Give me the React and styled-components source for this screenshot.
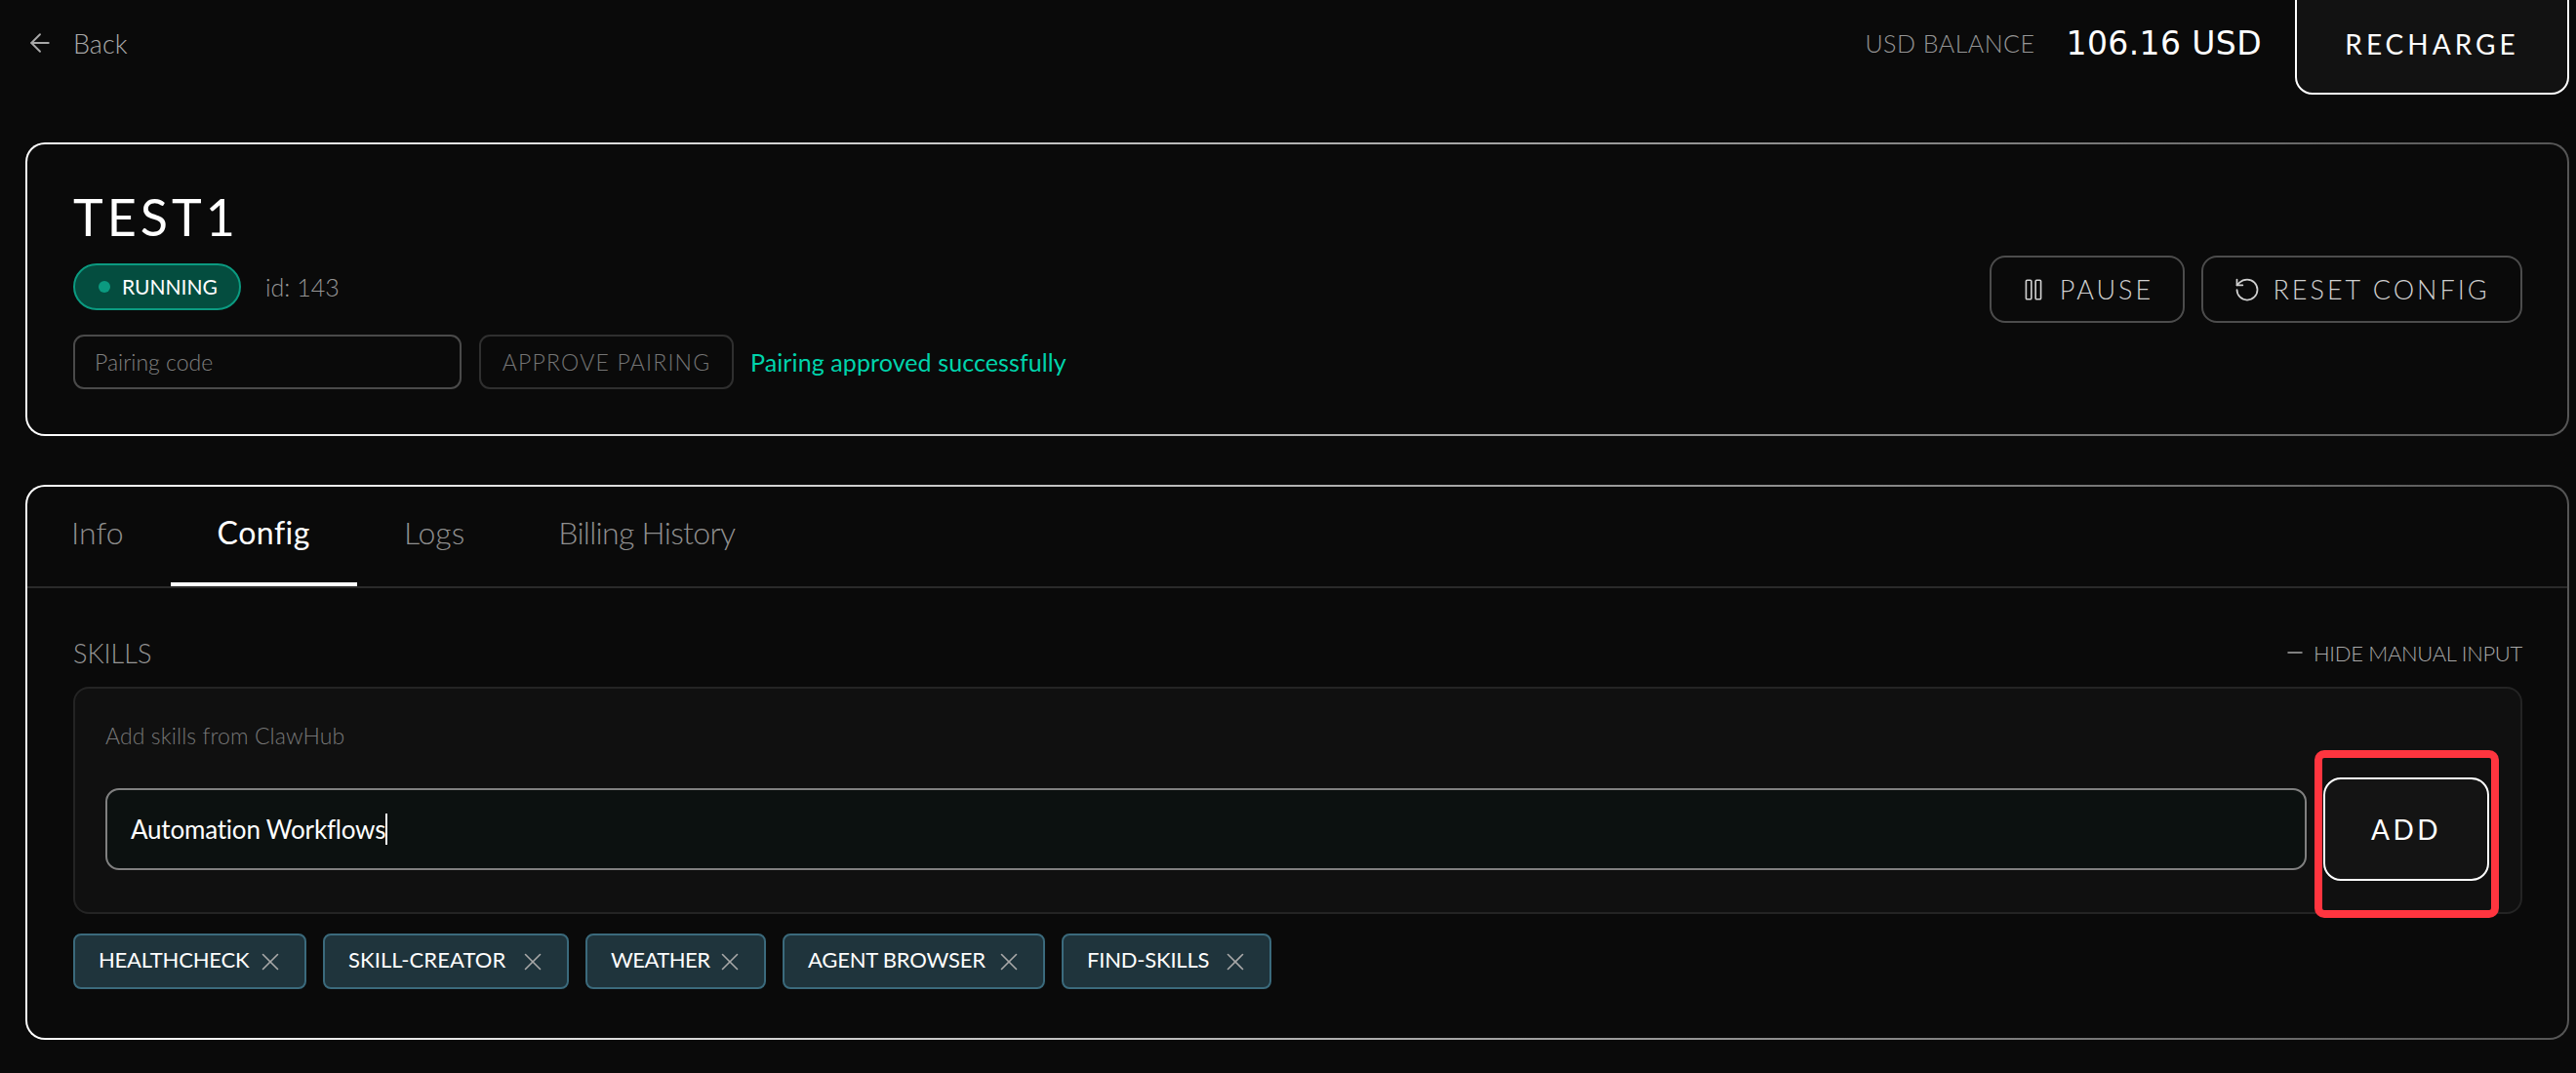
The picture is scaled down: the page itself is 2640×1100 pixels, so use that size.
import React from 'react';
import styled, { createGlobalStyle } from 'styled-components';
import { ArrowLeft, Minus, Pause, RotateCcw, X } from 'lucide-react';

const GlobalStyle = createGlobalStyle`
  html, body {
    margin: 0;
    padding: 0;
    background: #0a0a0a;
    font-family: "Lato", "Liberation Sans", sans-serif;
    color: #fff;
  }
  * { box-sizing: border-box; }
`;

const Page = styled.div`
  width: 2640px;
  height: 1100px;
  padding: 0 7px 0 26px;
  overflow: hidden;
  background: #0a0a0a;
`;

const Header = styled.header`
  display: flex;
  justify-content: space-between;
  height: 97px;
  overflow: hidden;
`;

const BackLink = styled.a`
  display: flex;
  align-items: center;
  gap: 19px;
  height: 88px;
  font-size: 27px;
  font-weight: 300;
  color: #a8a8a8;
`;

const Balance = styled.div`
  display: flex;
  align-items: flex-start;
  height: 97px;
`;

const BalanceLabel = styled.span`
  margin-top: 29px;
  margin-right: 32px;
  font-size: 25px;
  font-weight: 300;
  color: #969696;
  letter-spacing: 0.5px;
`;

const BalanceValue = styled.span`
  margin-top: 25px;
  margin-right: 34px;
  font: 400 33px "DejaVu Sans", sans-serif;
  letter-spacing: 0.4px;
  color: #fff;
`;

const RechargeButton = styled.button`
  width: 281px;
  height: 130px;
  margin-top: -33px;
  padding: 25px 0 0;
  border: 2px solid #fff;
  border-radius: 18px;
  background: #121212;
  color: #fff;
  font: 400 28px "Lato", sans-serif;
  letter-spacing: 4px;
`;

const Card = styled.section`
  margin-top: ${p => p.$top}px;
  height: ${p => p.$height}px;
  border: 2px solid transparent;
  border-radius: 20px;
  background:
    linear-gradient(#0a0a0a, #0a0a0a) padding-box,
    linear-gradient(90deg, #fff 0%, #bbb 45%, #555 100%) border-box;
`;

const SummaryCard = styled(Card)`
  display: flex;
  align-items: center;
  justify-content: space-between;
  padding: 0 46px 0 47px;
`;

const Summary = styled.div`
  display: flex;
  flex-direction: column;
  align-items: flex-start;
  padding-top: 3px;
`;

const Title = styled.h1`
  margin: 0 0 22px;
  height: 50px;
  font-size: 52px;
  line-height: 48px;
  font-weight: 400;
  letter-spacing: 4px;
`;

const StatusRow = styled.div`
  display: flex;
  align-items: center;
  gap: 25px;
  margin-bottom: 25px;
`;

const StatusPill = styled.span`
  display: flex;
  align-items: center;
  gap: 12px;
  width: 172px;
  height: 48px;
  padding-left: 24px;
  border: 2px solid #0b9a80;
  border-radius: 24px;
  background: #044d3f;
  font-size: 21px;
  font-weight: 400;
`;

const StatusDot = styled.i`
  width: 12px;
  height: 12px;
  border-radius: 50%;
  background: #0b9a80;
`;

const IdText = styled.span`
  font-size: 25px;
  font-weight: 300;
  color: #969696;
`;

const PairingRow = styled.div`
  display: flex;
  align-items: center;
`;

const PairingField = styled.div`
  display: flex;
  align-items: center;
  width: 398px;
  height: 56px;
  padding-left: 20px;
  border: 2px solid #4a4a4a;
  border-radius: 11px;
  font-size: 23px;
  font-weight: 300;
  color: #808080;
`;

const ApproveButton = styled.button`
  width: 261px;
  height: 56px;
  margin: 0 17px 0 18px;
  padding: 0;
  border: 2px solid #2f2f2f;
  border-radius: 11px;
  background: transparent;
  color: #757575;
  font: 300 23px "Lato", sans-serif;
  letter-spacing: 1.2px;
`;

const SuccessText = styled.span`
  font-size: 25px;
  font-weight: 400;
  letter-spacing: 0.1px;
  color: #00d4ac;
`;

const Actions = styled.div`
  display: flex;
  gap: 17px;
`;

const ActionButton = styled.button`
  display: flex;
  align-items: center;
  justify-content: center;
  gap: ${p => p.$gap}px;
  width: ${p => p.$width}px;
  height: 69px;
  padding: 0;
  border: 2px solid #4c4c4c;
  border-radius: 16px;
  background: transparent;
  color: #d0d0d0;
  font: 300 27px "Lato", sans-serif;
  letter-spacing: 3px;
`;

const Tabs = styled.nav`
  display: flex;
  height: 104px;
  border-bottom: 2px solid #2a2a2a;
`;

const Tab = styled.div`
  display: flex;
  align-items: center;
  height: 102px;
  padding: 0 48px 5px;
  font-size: 32px;
  font-weight: ${p => (p.$active ? 400 : 300)};
  letter-spacing: ${p => p.$spacing}px;
  color: ${p => (p.$active ? '#fff' : '#8f8f8f')};
  border-bottom: 4px solid ${p => (p.$active ? '#fff' : 'transparent')};
  &:first-child { margin-left: -3px; }
`;

const ConfigBody = styled.div`
  padding: 0 46px 0 47px;
`;

const SectionHead = styled.div`
  display: flex;
  align-items: center;
  justify-content: space-between;
  height: 28px;
  margin: 52px 0 21px;
`;

const SectionTitle = styled.span`
  font-size: 27px;
  font-weight: 300;
  color: #969696;
`;

const ManualToggle = styled.span`
  display: flex;
  align-items: center;
  gap: 7px;
  font-size: 22px;
  font-weight: 300;
  letter-spacing: -0.3px;
  color: #a8a8a8;
`;

const SkillsPanel = styled.div`
  height: 233px;
  padding: 29px 32px 0 31px;
  border: 2px solid #242424;
  border-radius: 16px;
  background: #101010;
`;

const PanelLabel = styled.div`
  height: 38px;
  margin-bottom: 24px;
  line-height: 38px;
  font-size: 23px;
  font-weight: 300;
  letter-spacing: 0.1px;
  color: #777;
`;

const AddRow = styled.div`
  display: flex;
  align-items: center;
  gap: 17px;
`;

const SkillInput = styled.div`
  flex: 1;
  display: flex;
  align-items: center;
  height: 84px;
  padding-left: 24px;
  border: 2px solid #808080;
  border-radius: 14px;
  background: #0c1110;
  font-size: 26px;
  font-weight: 400;
  letter-spacing: -0.2px;
`;

const Caret = styled.i`
  width: 2px;
  height: 32px;
  background: #fff;
`;

const AddWrap = styled.div`
  position: relative;
`;

const AddButton = styled.button`
  display: block;
  width: 170px;
  height: 106px;
  padding: 0;
  border: 2px solid #fff;
  border-radius: 18px;
  background: #141414;
  color: #fff;
  font: 400 28px "Lato", sans-serif;
  letter-spacing: 3.5px;
`;

const Highlight = styled.div`
  position: absolute;
  inset: -28px -10px -38px -9px;
  border: 8px solid #ff353f;
  border-radius: 10px;
  pointer-events: none;
`;

const Chips = styled.div`
  display: flex;
  gap: 17px;
  margin-top: 20px;
`;

const Chip = styled.span`
  display: flex;
  align-items: center;
  justify-content: space-between;
  width: ${p => p.$width}px;
  height: 57px;
  padding: 0 20px 4px 24px;
  border: 2px solid #3b6a7c;
  border-radius: 8px;
  background: #1f343c;
  font-size: 22px;
  font-weight: 400;
  letter-spacing: ${p => p.$spacing}px;
  color: #fff;
  svg { color: #a8a8a8; flex: none; margin-top: 4px; }
`;

const skills = [
  { name: 'HEALTHCHECK', width: 239, spacing: -0.2 },
  { name: 'SKILL-CREATOR', width: 252, spacing: 0.1 },
  { name: 'WEATHER', width: 185, spacing: -0.5 },
  { name: 'AGENT BROWSER', width: 269, spacing: -0.2 },
  { name: 'FIND-SKILLS', width: 215, spacing: -0.2 },
];

const tabs = [
  { name: 'Info', spacing: 0 },
  { name: 'Config', spacing: 0.5 },
  { name: 'Logs', spacing: 0 },
  { name: 'Billing History', spacing: -0.7 },
];

export default function App() {
  return (
    <Page>
      <GlobalStyle />
      <Header>
        <BackLink>
          <ArrowLeft size={30} strokeWidth={1.5} />
          Back
        </BackLink>
        <Balance>
          <BalanceLabel>USD BALANCE</BalanceLabel>
          <BalanceValue>106.16 USD</BalanceValue>
          <RechargeButton>RECHARGE</RechargeButton>
        </Balance>
      </Header>

      <SummaryCard $top={49} $height={301}>
        <Summary>
          <Title>TEST1</Title>
          <StatusRow>
            <StatusPill>
              <StatusDot />
              RUNNING
            </StatusPill>
            <IdText>id: 143</IdText>
          </StatusRow>
          <PairingRow>
            <PairingField>Pairing code</PairingField>
            <ApproveButton>APPROVE PAIRING</ApproveButton>
            <SuccessText>Pairing approved successfully</SuccessText>
          </PairingRow>
        </Summary>
        <Actions>
          <ActionButton $width={200} $gap={14}>
            <Pause size={26} strokeWidth={1.5} />
            PAUSE
          </ActionButton>
          <ActionButton $width={329} $gap={12}>
            <RotateCcw size={28} strokeWidth={1.5} />
            RESET CONFIG
          </ActionButton>
        </Actions>
      </SummaryCard>

      <Card $top={50} $height={569}>
        <Tabs>
          {tabs.map(tab => (
            <Tab key={tab.name} $active={tab.name === 'Config'} $spacing={tab.spacing}>
              {tab.name}
            </Tab>
          ))}
        </Tabs>
        <ConfigBody>
          <SectionHead>
            <SectionTitle>SKILLS</SectionTitle>
            <ManualToggle>
              <Minus size={24} strokeWidth={1.5} />
              HIDE MANUAL INPUT
            </ManualToggle>
          </SectionHead>
          <SkillsPanel>
            <PanelLabel>Add skills from ClawHub</PanelLabel>
            <AddRow>
              <SkillInput>
                Automation Workflows
                <Caret />
              </SkillInput>
              <AddWrap>
                <AddButton>ADD</AddButton>
                <Highlight />
              </AddWrap>
            </AddRow>
          </SkillsPanel>
          <Chips>
            {skills.map(skill => (
              <Chip key={skill.name} $width={skill.width} $spacing={skill.spacing}>
                {skill.name}
                <X size={30} strokeWidth={1.3} />
              </Chip>
            ))}
          </Chips>
        </ConfigBody>
      </Card>
    </Page>
  );
}
